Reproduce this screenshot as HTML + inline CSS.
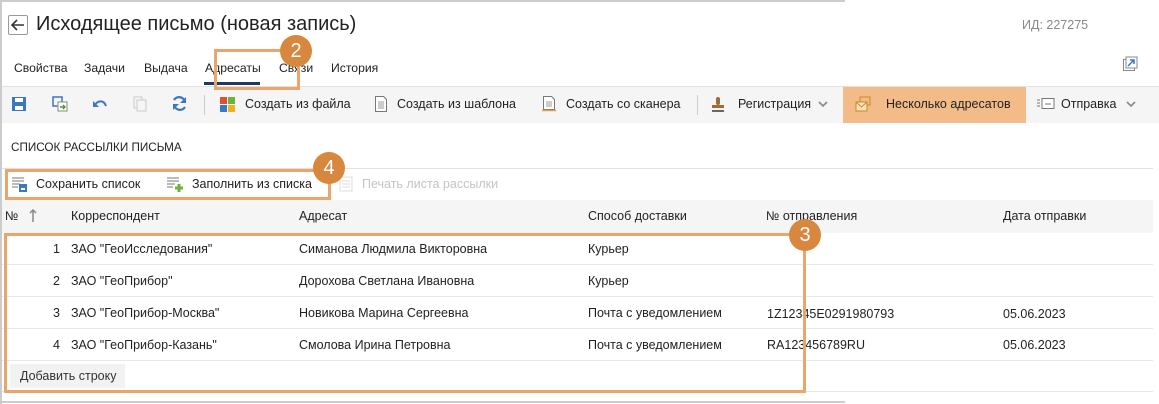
<!DOCTYPE html>
<html><head><meta charset="utf-8">
<style>
*{margin:0;padding:0;box-sizing:border-box}
body{width:1159px;height:404px;background:#fff;font-family:"Liberation Sans","Noto Sans CJK SC",sans-serif;color:#222;position:relative;overflow:hidden;font-size:12.2px}
.a{position:absolute;white-space:nowrap}
.ob{position:absolute;border:3px solid #e9a56b}
.badge{position:absolute;width:32px;height:32px;border-radius:50%;background:#d8873e;color:#fff;font-size:20px;text-align:center;line-height:32px}
.tb{font-size:12.2px;color:#222}
.tt{font-size:12.5px;color:#222}
.row{position:absolute;left:2px;width:1151px;height:32px;border-bottom:1px solid #e6e8ec}
</style></head><body>
<div class="a" style="left:0;top:0;width:845px;height:2px;background:#ccc"></div>
<div class="a" style="left:0;top:0;width:2px;height:404px;background:#ccc"></div>
<div class="a" style="left:0;top:401px;width:845px;height:2px;background:#ccc"></div>

<div class="a" style="left:8px;top:15px;width:20px;height:20px;border:1px solid #999;border-radius:2px;background:#fff"></div>
<svg class="a" style="left:11px;top:19px" width="14" height="12" viewBox="0 0 14 12"><path d="M6 1L1 6l5 5M1 6h12" stroke="#333" stroke-width="1.6" fill="none"/></svg>
<div class="a" style="left:36px;top:13px;font-size:20px;color:#222">Исходящее письмо (новая запись)</div>
<div class="a" style="left:1022px;top:18px;font-size:12.5px;color:#888">ИД: 227275</div>

<div class="a tb" style="left:14px;top:61px">Свойства</div>
<div class="a tb" style="left:84px;top:61px">Задачи</div>
<div class="a tb" style="left:144px;top:61px">Выдача</div>
<div class="a tb" style="left:205px;top:61px">Адресаты</div>
<div class="a" style="left:204px;top:82px;width:56px;height:3px;background:#1f3a60"></div>
<div class="a tb" style="left:279px;top:61px">Связи</div>
<div class="a tb" style="left:331px;top:61px">История</div>
<svg class="a" style="left:1122px;top:56px" width="16" height="16" viewBox="0 0 16 16"><rect x="1.5" y="3.5" width="11" height="11" fill="none" stroke="#888"/><rect x="4" y="1" width="11" height="11" fill="#fff" stroke="#888"/><path d="M6 10l6-6M8 4h4v4" stroke="#3a78c0" stroke-width="1.5" fill="none"/></svg>

<div class="a" style="left:2px;top:86px;width:1157px;height:37px;background:#f5f5f5;border-top:1px solid #e2e2e2"></div>
<svg class="a" style="left:11px;top:96px" width="16" height="16" viewBox="0 0 16 16"><rect x="1" y="1" width="14" height="14" fill="#3a78c0"/><rect x="4" y="2" width="8" height="4" fill="#fff"/><rect x="4" y="10" width="8" height="4" fill="#fff"/></svg>
<svg class="a" style="left:52px;top:96px" width="16" height="16" viewBox="0 0 16 16"><rect x="1" y="1" width="9" height="9" fill="none" stroke="#3a78c0" stroke-width="1.5"/><rect x="6" y="6" width="9" height="9" fill="#fff" stroke="#888"/><path d="M8 11h5M11 9l2 2-2 2" stroke="#4a9a2a" stroke-width="1.4" fill="none"/></svg>
<svg class="a" style="left:92px;top:97px" width="16" height="14" viewBox="0 0 16 14"><path d="M3 8c3-5 9-5 11 1" stroke="#3a78c0" stroke-width="2" fill="none"/><path d="M1 4v6h6z" fill="#3a78c0"/></svg>
<svg class="a" style="left:133px;top:96px" width="14" height="16" viewBox="0 0 14 16"><rect x="1" y="1" width="8" height="11" fill="none" stroke="#ccc"/><rect x="4" y="4" width="9" height="11" fill="#f5f5f5" stroke="#ccc"/></svg>
<svg class="a" style="left:171px;top:95px" width="17" height="17" viewBox="0 0 17 17"><path d="M14 7A6 6 0 0 0 3 5M3 10a6 6 0 0 0 11 2" stroke="#3a78c0" stroke-width="2.2" fill="none"/><path d="M15 2v6h-6zM2 15V9h6z" fill="#3a78c0"/></svg>
<div class="a" style="left:204px;top:95px;width:1px;height:20px;background:#ccc"></div>
<svg class="a" style="left:220px;top:97px" width="15" height="15" viewBox="0 0 15 15"><rect x="0" y="0" width="7" height="7" fill="#d9532e"/><rect x="8" y="0" width="7" height="7" fill="#6cb33e"/><rect x="0" y="8" width="7" height="7" fill="#3a78c0"/><rect x="8" y="8" width="7" height="7" fill="#f0b020"/></svg>
<div class="a tt" style="left:245px;top:97px">Создать из файла</div>
<svg class="a" style="left:375px;top:96px" width="12" height="16" viewBox="0 0 12 16"><path d="M.5.5h8l3 3v12H.5z" fill="#fff" stroke="#777"/><path d="M3 6h6M3 8h6M3 10h6M3 12h6" stroke="#999"/></svg>
<div class="a tt" style="left:397px;top:97px">Создать из шаблона</div>
<svg class="a" style="left:542px;top:96px" width="14" height="16" viewBox="0 0 14 16"><path d="M1.5.5h8l3 3v10h-11z" fill="#fff" stroke="#777"/><path d="M4 6h6M4 8h6M4 10h6" stroke="#999"/><path d="M0 14.5h14" stroke="#e0a050" stroke-width="1.5"/></svg>
<div class="a tt" style="left:566px;top:97px">Создать со сканера</div>
<div class="a" style="left:697px;top:95px;width:1px;height:20px;background:#ccc"></div>
<svg class="a" style="left:711px;top:96px" width="14" height="16" viewBox="0 0 14 16"><rect x="5" y="1" width="4" height="8" rx="2" fill="#a06a3a"/><rect x="1" y="9" width="12" height="3" fill="#a06a3a"/><rect x="1" y="14" width="12" height="2" fill="#666"/></svg>
<div class="a tt" style="left:738px;top:97px">Регистрация</div>
<svg class="a" style="left:818px;top:101px" width="10" height="7" viewBox="0 0 10 7"><path d="M1 1l4 4 4-4" stroke="#888" stroke-width="1.6" fill="none"/></svg>
<div class="a" style="left:843px;top:87px;width:183px;height:36px;background:#f3bb88"></div>
<svg class="a" style="left:855px;top:96px" width="16" height="16" viewBox="0 0 16 16"><rect x="5" y="1" width="10" height="8" fill="#f3bb88" stroke="#c98a20"/><rect x="1" y="6" width="11" height="9" fill="#fbe0c0" stroke="#c98a20"/><path d="M1 6l5.5 5 5.5-5" stroke="#c98a20" fill="none"/></svg>
<div class="a tt" style="left:886px;top:97px">Несколько адресатов</div>
<svg class="a" style="left:1037px;top:98px" width="18" height="12" viewBox="0 0 18 12"><path d="M0 2h3M0 5h3M0 8h3" stroke="#777"/><rect x="5" y=".5" width="12" height="10" fill="#fff" stroke="#777"/><path d="M8 6h6" stroke="#777"/></svg>
<div class="a tt" style="left:1061px;top:97px">Отправка</div>
<svg class="a" style="left:1126px;top:101px" width="10" height="7" viewBox="0 0 10 7"><path d="M1 1l4 4 4-4" stroke="#888" stroke-width="1.6" fill="none"/></svg>

<div class="a" style="left:11px;top:141px;font-size:11.7px;color:#222">СПИСОК РАССЫЛКИ ПИСЬМА</div>
<div class="a" style="left:2px;top:168px;width:1151px;height:1px;background:#e2e2e2"></div>
<svg class="a" style="left:12px;top:177px" width="16" height="15" viewBox="0 0 16 15"><path d="M0 1h12M0 4h12M0 7h8M0 10h6" stroke="#777"/><rect x="7" y="7" width="8" height="8" fill="#3a78c0"/><rect x="9" y="11" width="4" height="2" fill="#fff"/></svg>
<div class="a tt" style="left:36px;top:177px">Сохранить список</div>
<svg class="a" style="left:167px;top:177px" width="16" height="15" viewBox="0 0 16 15"><path d="M0 1h12M0 4h12M0 7h8M0 10h6" stroke="#777"/><path d="M8 11h8M12 7v8" stroke="#6cb33e" stroke-width="3"/></svg>
<div class="a tt" style="left:192px;top:177px">Заполнить из списка</div>
<svg class="a" style="left:339px;top:176px" width="14" height="16" viewBox="0 0 14 16"><rect x="1" y="1" width="12" height="14" fill="none" stroke="#ddd"/><path d="M3 5h8M3 8h8M3 11h8" stroke="#ddd"/></svg>
<div class="a" style="left:362px;top:177px;font-size:12.5px;color:#c4c4c4">Печать листа рассылки</div>

<div class="a" style="left:2px;top:200px;width:1151px;height:33px;background:#f5f5f5"></div>
<div class="a tt" style="left:5px;top:209px">№</div>
<svg class="a" style="left:29px;top:209px" width="8" height="13" viewBox="0 0 8 13"><path d="M4 1v12M1 4l3-3 3 3" stroke="#888" stroke-width="1.5" fill="none"/></svg>
<div class="a tt" style="left:71px;top:209px">Корреспондент</div>
<div class="a tt" style="left:299px;top:209px">Адресат</div>
<div class="a tt" style="left:588px;top:209px">Способ доставки</div>
<div class="a tt" style="left:766px;top:209px">№ отправления</div>
<div class="a tt" style="left:1003px;top:209px">Дата отправки</div>

<div class="row" style="top:233px"></div>
<div class="row" style="top:265px"></div>
<div class="row" style="top:297px"></div>
<div class="row" style="top:329px"></div>
<div class="row" style="top:361px;height:31px"></div>

<div class="a tt" style="left:53px;top:242px">1</div><div class="a tt" style="left:71px;top:242px">ЗАО "ГеоИсследования"</div><div class="a tt" style="left:299px;top:242px">Симанова Людмила Викторовна</div><div class="a tt" style="left:588px;top:242px">Курьер</div>
<div class="a tt" style="left:53px;top:274px">2</div><div class="a tt" style="left:71px;top:274px">ЗАО "ГеоПрибор"</div><div class="a tt" style="left:299px;top:274px">Дорохова Светлана Ивановна</div><div class="a tt" style="left:588px;top:274px">Курьер</div>
<div class="a tt" style="left:53px;top:306px">3</div><div class="a tt" style="left:71px;top:306px">ЗАО "ГеоПрибор-Москва"</div><div class="a tt" style="left:299px;top:306px">Новикова Марина Сергеевна</div><div class="a tt" style="left:588px;top:306px">Почта с уведомлением</div><div class="a tt" style="left:767px;top:307px">1Z12345E0291980793</div><div class="a tt" style="left:1003px;top:307px">05.06.2023</div>
<div class="a tt" style="left:53px;top:338px">4</div><div class="a tt" style="left:71px;top:338px">ЗАО "ГеоПрибор-Казань"</div><div class="a tt" style="left:299px;top:338px">Смолова Ирина Петровна</div><div class="a tt" style="left:588px;top:338px">Почта с уведомлением</div><div class="a tt" style="left:767px;top:338px">RA123456789RU</div><div class="a tt" style="left:1003px;top:338px">05.06.2023</div>

<div class="a" style="left:10px;top:364px;width:115px;height:24px;background:#f2f2f2"></div>
<div class="a tt" style="left:20px;top:369px;color:#333">Добавить строку</div>

<div class="ob" style="left:214px;top:49px;width:86px;height:41px"></div>
<div class="badge" style="left:280px;top:35px">2</div>
<div class="ob" style="left:5px;top:169px;width:326px;height:31px"></div>
<div class="badge" style="left:313px;top:152px">4</div>
<div class="ob" style="left:4px;top:233px;width:802px;height:160px"></div>
<div class="badge" style="left:789px;top:219px">3</div>
</body></html>
